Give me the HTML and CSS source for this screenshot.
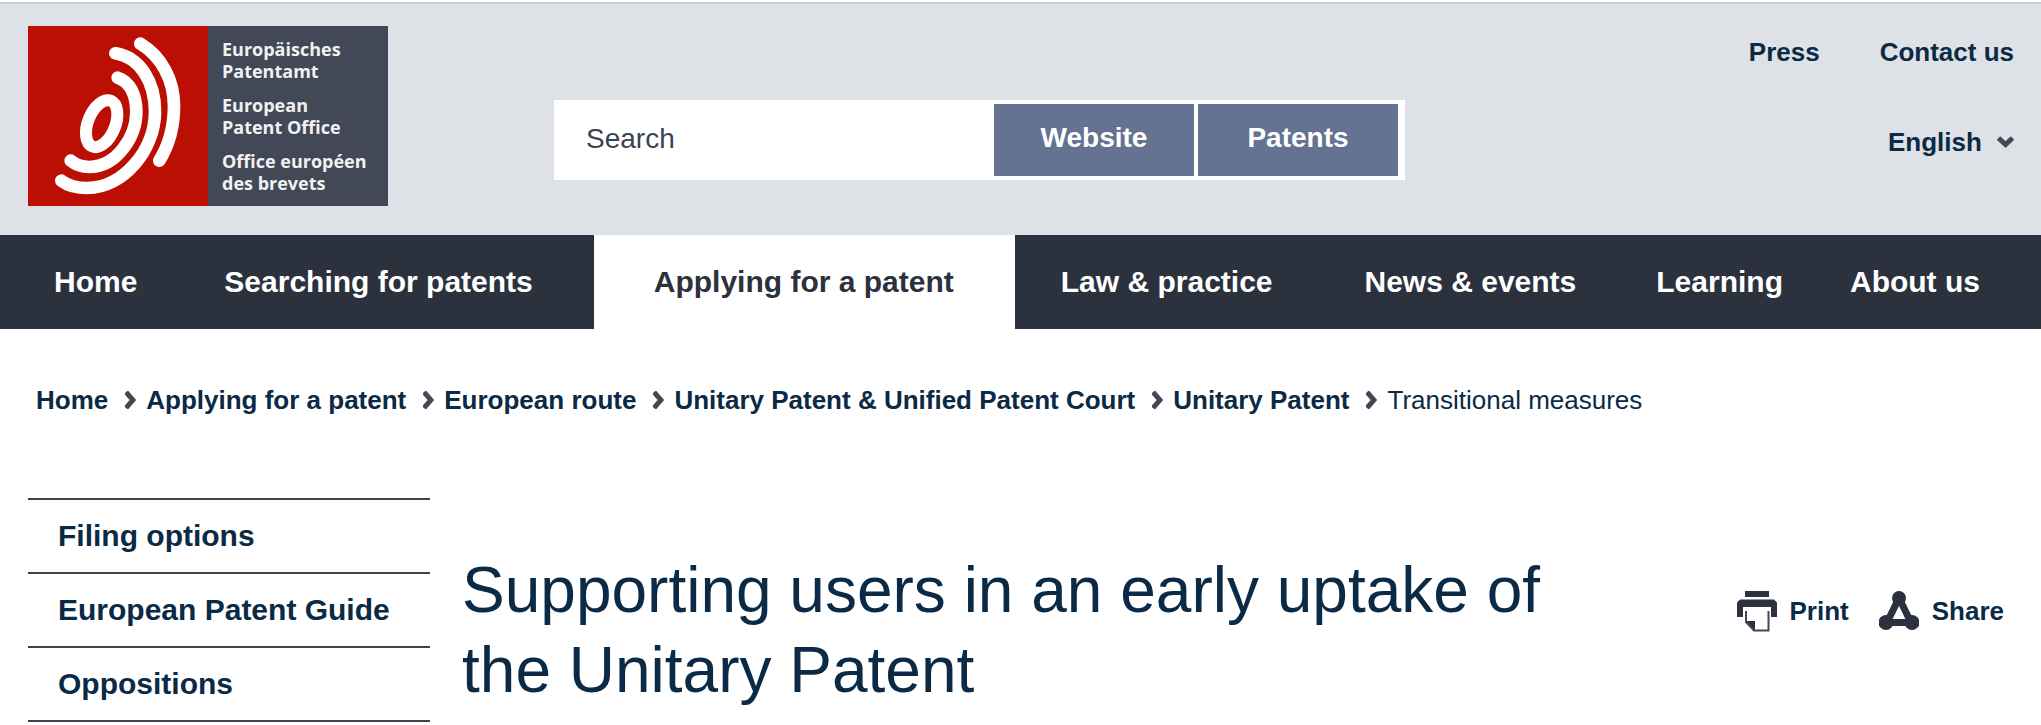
FILE: index.html
```
<!DOCTYPE html>
<html lang="en">
  <head>
    <meta charset="UTF-8" />
    <meta name="viewport" content="width=device-width, initial-scale=1.0" />
    <title>EPO - Supporting users in an early uptake of the Unitary Patent</title>
    <link rel="stylesheet" href="styles.css">
  </head>
  <body>
    <header class="header">
      <a class="logo" href="#" aria-label="European Patent Office">
        <svg class="logo-mark" viewBox="84 78 540 540" fill="none" stroke="#fff" stroke-width="38" stroke-linecap="round" aria-hidden="true">
          <ellipse cx="305" cy="371" rx="41" ry="74" transform="rotate(22 305 371)" stroke-width="36" />
          <path d="M353 233C390 245 409 285 409 335C409 410 350 501 268 501C245 501 228 495 212 482" />
          <path d="M346 160C420 172 465 245 465 335C465 450 370 564 262 564C230 564 205 558 184 542" />
          <path d="M421 131C485 170 522 240 522 318C522 380 510 430 478 482" />
        </svg>
        <span class="logo-names">
          <span>Europäisches<br />Patentamt</span>
          <span>European<br />Patent Office</span>
          <span>Office européen<br />des brevets</span>
        </span>
      </a>

      <form class="search" role="search">
        <input type="text" class="search-input" placeholder="Search" aria-label="Search" />
        <button type="button" class="search-button">Website</button>
        <button type="button" class="search-button">Patents</button>
      </form>

      <div class="meta">
        <div class="meta-links">
          <a href="#">Press</a>
          <a href="#">Contact us</a>
        </div>
        <div class="language">
          <select class="language-select" aria-label="Language">
            <option>English</option>
          </select>
          <svg class="language-arrow" viewBox="0 0 17 12" aria-hidden="true">
            <path d="M1.500 2L8.500 8.500L15.500 2" fill="none" stroke="#424855" stroke-width="5" />
          </svg>
        </div>
      </div>
    </header>

    <nav class="nav" aria-label="Main">
      <a class="nav-home" href="#">Home</a>
      <a class="nav-wide" href="#">Searching for patents</a>
      <a class="nav-wide active" href="#">Applying for a patent</a>
      <a class="nav-medium" href="#">Law &amp; practice</a>
      <a class="nav-medium" href="#">News &amp; events</a>
      <a class="nav-small" href="#">Learning</a>
      <a class="nav-small" href="#">About us</a>
    </nav>

    <nav class="breadcrumb" aria-label="Breadcrumb">
      <a href="#">Home</a>
      <svg viewBox="0 0 11 18" aria-hidden="true"><path d="M1 1L8 9L1 17" /></svg>
      <a href="#">Applying for a patent</a>
      <svg viewBox="0 0 11 18" aria-hidden="true"><path d="M1 1L8 9L1 17" /></svg>
      <a href="#">European route</a>
      <svg viewBox="0 0 11 18" aria-hidden="true"><path d="M1 1L8 9L1 17" /></svg>
      <a href="#">Unitary Patent &amp; Unified Patent Court</a>
      <svg viewBox="0 0 11 18" aria-hidden="true"><path d="M1 1L8 9L1 17" /></svg>
      <a href="#">Unitary Patent</a>
      <svg viewBox="0 0 11 18" aria-hidden="true"><path d="M1 1L8 9L1 17" /></svg>
      <span>Transitional measures</span>
    </nav>

    <div class="content">
      <nav class="sidebar" aria-label="Section">
        <a href="#">Filing options</a>
        <a href="#">European Patent Guide</a>
        <a href="#">Oppositions</a>
      </nav>

      <main class="main">
        <h1>Supporting users in an early uptake of the Unitary Patent</h1>
        <div class="tools">
          <button type="button" class="tool">
            <svg viewBox="0 0 40 41" aria-hidden="true">
              <path d="M8 0H32V6H8Z" fill="#2b323d" />
              <path d="M3 8.500H37L40 11.500V26H34V16H6V26H0V11.500Z" fill="#2b323d" />
              <path d="M9 20V31L17 39.500H31.500V20" fill="none" stroke="#424855" stroke-width="2" />
              <path d="M9 30H18V39.500Z" fill="#2b323d" />
            </svg>
            Print
          </button>
          <button type="button" class="tool">
            <svg viewBox="0 0 40 41" aria-hidden="true">
              <path d="M20 7L8 31.500H32Z" fill="none" stroke="#2b323d" stroke-width="7" />
              <circle cx="20" cy="7" r="7" fill="#2b323d" />
              <circle cx="7" cy="31.500" r="7.500" fill="#2b323d" />
              <circle cx="33" cy="31.500" r="7.500" fill="#2b323d" />
            </svg>
            Share
          </button>
        </div>
      </main>
    </div>
  </body>
</html>
```

FILE: styles.css
```
* {
  box-sizing: border-box;
}
body {
  margin: 0;
  padding-top: 2px;
  font-family: "Liberation Sans", Arial, sans-serif;
  font-size: 26px;
  line-height: 30px;
  color: #0a2a45;
  background: #fff;
}
a {
  color: inherit;
  text-decoration: none;
}
a:hover {
  text-decoration: underline;
}

/* header */
.header {
  display: flex;
  align-items: flex-start;
  padding: 22px 27px 29px 28px;
  border-top: 2px solid #c8ccd0;
  background: #dee1e6;
}
.logo {
  display: flex;
  flex: none;
  width: 360px;
  height: 180px;
  background: #424855;
}
.logo-mark {
  width: 180px;
  height: 180px;
  background: #bc0f04;
}
.logo-names {
  display: flex;
  flex-direction: column;
  gap: 12px;
  padding: 12px 0 0 14px;
  font-family: "Open Sans", "Noto Sans", sans-serif;
  font-size: 18px;
  font-weight: 700;
  line-height: 22px;
  white-space: nowrap;
  color: #f0f1f3;
}
.search {
  display: flex;
  flex: 0 1 851px;
  gap: 4px;
  height: 80px;
  margin: 74px 0 0 166px;
  padding: 4px 7px 4px 0;
  background: #fff;
}
.search-input {
  flex: 1;
  min-width: 0;
  padding: 0 0 2px 32px;
  border: none;
  font: 28px "Liberation Sans", Arial, sans-serif;
  color: #3a4351;
  background: transparent;
}
.search-input::placeholder {
  color: #3a4351;
  opacity: 1;
}
.search-button {
  width: 200px;
  padding: 0 0 4px;
  border: none;
  font: bold 28px "Liberation Sans", Arial, sans-serif;
  color: #fff;
  background: #647391;
  cursor: pointer;
}
.meta {
  display: flex;
  flex-direction: column;
  align-items: flex-end;
  gap: 60px;
  margin-left: auto;
  padding-top: 11px;
  font-weight: bold;
  white-space: nowrap;
}
.meta-links {
  display: flex;
  gap: 60px;
}
.language {
  display: flex;
  align-items: center;
  gap: 15px;
}
.language-select {
  height: 30px;
  padding: 0;
  border: none;
  appearance: none;
  font: bold 26px "Liberation Sans", Arial, sans-serif;
  color: #0a2a45;
  background: transparent;
}
.language-arrow {
  width: 17px;
  height: 12px;
}

/* main navigation */
.nav {
  display: flex;
  padding-left: 26px;
  font-size: 30px;
  font-weight: bold;
  line-height: 94px;
  white-space: nowrap;
  color: #fff;
  background: #2b323d;
}
.nav-home {
  padding: 0 27px 0 28px;
}
.nav-wide {
  padding: 0 61px 0 60px;
}
.nav-medium {
  padding: 0 46px;
}
.nav-small {
  padding: 0 33px 0 34px;
}
.nav .active {
  color: #2b323d;
  background: #fff;
}

/* breadcrumb */
.breadcrumb {
  display: flex;
  flex-wrap: wrap;
  align-items: center;
  padding: 56px 36px 0;
}
.breadcrumb a {
  font-weight: bold;
}
.breadcrumb svg {
  width: 11px;
  height: 18px;
  margin: 0 10px 0 17px;
  fill: none;
  stroke: #424855;
  stroke-width: 5;
}

/* page content */
.content {
  display: flex;
  gap: 32px;
  padding: 83px 37px 0 28px;
}
.sidebar {
  flex: 0 0 402px;
  border-top: 2px solid #3a4351;
}
.sidebar a {
  display: block;
  padding: 0 30px;
  border-bottom: 2px solid #3a4351;
  font-size: 30px;
  font-weight: bold;
  line-height: 72px;
}
.main {
  display: flex;
  flex: 1;
  justify-content: space-between;
  gap: 80px;
  padding-top: 52px;
}
h1 {
  max-width: 1140px;
  margin: 0;
  font-size: 64px;
  font-weight: normal;
  line-height: 80px;
}
.tools {
  display: flex;
  align-items: flex-start;
  gap: 30px;
  padding-top: 41px;
}
.tool {
  display: flex;
  align-items: center;
  gap: 13px;
  padding: 0;
  border: none;
  font: bold 26px "Liberation Sans", Arial, sans-serif;
  color: #0a2a45;
  background: none;
  cursor: pointer;
}
.tool svg {
  width: 40px;
  height: 41px;
}
```
